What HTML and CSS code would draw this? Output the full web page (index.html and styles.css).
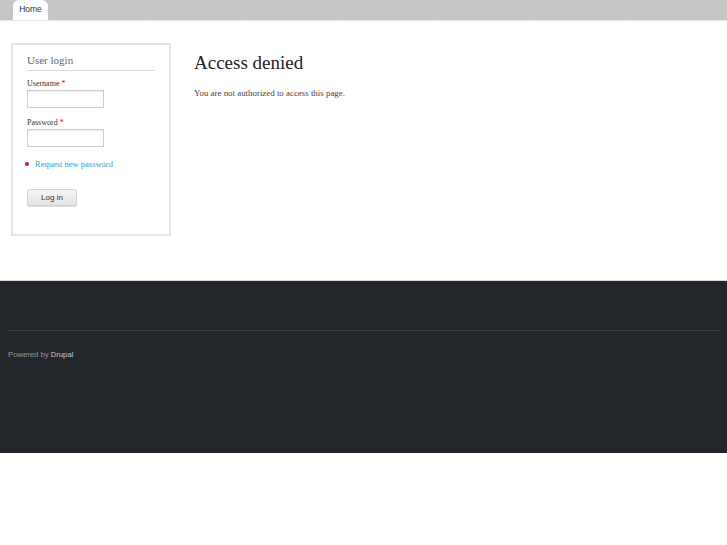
FILE: index.html
```html
<!DOCTYPE html>
<html lang="en">
<head>
    <meta charset="UTF-8">
    <title>Access denied</title>
    <link rel="stylesheet" href="styles.css">
</head>
<body>

<div class="topbar">
    <ul class="tabs">
        <li class="tab active">Home</li>
        <li class="sep"></li>
        <li class="sep"></li>
        <li class="sep"></li>
        <li class="sep"></li>
        <li class="sep"></li>
        <li class="sep"></li>
        <li class="sep"></li>
    </ul>
</div>

<div class="page">
    <div class="sidebar">
        <div class="block">
            <h2 class="block-title">User login</h2>
            <div class="field">
                <label>Username <span class="req">*</span></label>
                <input type="text" class="text-input">
            </div>
            <div class="field">
                <label>Password <span class="req">*</span></label>
                <input type="password" class="text-input">
            </div>
            <ul class="links">
                <li><a href="#">Request new password</a></li>
            </ul>
            <button class="btn">Log in</button>
        </div>
    </div>
    <div class="content">
        <h1 class="title">Access denied</h1>
        <p class="msg">You are not authorized to access this page.</p>
    </div>
</div>

<div class="footer">
    <div class="footer-rule"></div>
    <p class="credit">Powered by <a href="#">Drupal</a></p>
</div>

</body>
</html>
```

FILE: styles.css
```css
body {
    margin: 0;
    background: #fff;
    font-family: "Liberation Serif", "Times New Roman", serif;
    color: #333;
}

/* top nav */
.topbar {
    height: 20px;
    background: #c5c6c8;
    border-bottom: 1px solid #e6e6e6;
}
.tabs {
    list-style: none;
    margin: 0;
    padding: 0 0 0 13px;
    display: flex;
    height: 20px;
}
.tab {
    width: 35px;
    height: 20px;
    line-height: 18px;
    text-align: center;
    font-family: "Liberation Sans", Arial, sans-serif;
    font-size: 8.5px;
    color: #333;
}
.tab.active {
    background: #fff;
    border-radius: 6px 6px 0 0;
}
.sep {
    width: 96px;
    height: 20px;
    border-left: 1px solid #c8c9cb;
}
.sep:first-of-type { margin-left: 37px; }

/* main */
.page {
    display: flex;
    padding: 22px 0 44px 11px;
}
.sidebar {
    width: 160px;
}
.block {
    border: 2px solid #e6e6e6;
    padding: 9px 14px 28px 14px;
}
.block-title {
    margin: 0 0 8px;
    padding-bottom: 4px;
    font-size: 11px;
    font-weight: normal;
    color: #666;
    border-bottom: 1px solid #ddd;
}
.field {
    margin-bottom: 10px;
}
.field label {
    display: block;
    font-size: 8px;
    color: #333;
    margin-bottom: 2px;
}
.req {
    color: #e00;
}
.text-input {
    display: block;
    box-sizing: border-box;
    width: 77px;
    height: 18px;
    margin: 0;
    border: 1px solid #ccc;
    box-shadow: inset 0 1px 1px #eee;
    padding: 0 3px;
}
.links {
    list-style: none;
    margin: 12px 0 20px -2px;
    padding: 0;
    font-size: 8.5px;
}
.links li {
    display: flex;
    align-items: center;
    gap: 6px;
}
.links li::before {
    content: "";
    width: 4px;
    height: 4px;
    border-radius: 50%;
    background: #b3232a;
}
.links a {
    color: #2ba2c3;
    text-decoration: none;
}
.btn {
    display: block;
    width: 50px;
    height: 17px;
    padding: 0;
    font-family: "Liberation Sans", Arial, sans-serif;
    font-size: 8px;
    color: #333;
    background: linear-gradient(#f6f6f6, #e4e4e4);
    border: 1px solid #d3d3d3;
    border-radius: 2px;
    box-shadow: 0 1px 0 #ddd;
}

.content {
    padding-left: 23px;
}
.title {
    margin: 9px 0 0;
    font-size: 19px;
    font-weight: normal;
    color: #222;
}
.msg {
    margin: 14px 0 0;
    font-size: 8.9px;
    color: #444;
}

/* footer */
.footer {
    background: #23262b;
    border-top: 1px solid #d8d8d8;
    height: 173px;
    padding: 49px 7px 0 8px;
    box-sizing: border-box;
}
.footer-rule {
    height: 1px;
    background: #3b3e43;
}
.credit {
    margin: 19px 0 0;
    font-family: "Liberation Sans", Arial, sans-serif;
    font-size: 7.7px;
    color: #999;
}
.credit a {
    color: #c8c8c8;
    text-decoration: none;
}
```
